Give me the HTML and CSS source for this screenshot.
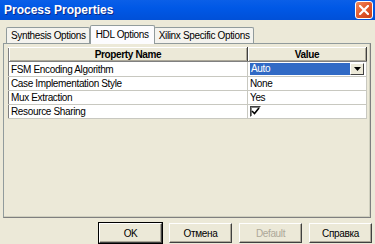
FILE: index.html
```html
<!DOCTYPE html>
<html lang="en">
<head>
    <meta charset="UTF-8">
    <meta name="viewport" content="width=device-width, initial-scale=1.0">
    <title>Process Properties</title>
    <link rel="stylesheet" href="styles.css">
</head>
<body>
    <div class="dialog">
        <div class="titlebar">
            <span class="title">Process Properties</span>
            <div class="btn-close">
                <svg width="10" height="10" viewBox="0 0 10 10">
                    <path d="M1 1 L9 9 M9 1 L1 9" stroke="#fff" stroke-width="2.2" stroke-linecap="square"/>
                </svg>
            </div>
        </div>

        <div class="tabs">
            <div class="tab">Synthesis Options</div>
            <div class="tab active">HDL Options</div>
            <div class="tab">Xilinx Specific Options</div>
        </div>

        <div class="panel">
            <table class="props">
                <thead>
                    <tr>
                        <th class="col-name">Property Name</th>
                        <th class="col-value">Value</th>
                    </tr>
                </thead>
                <tbody>
                    <tr>
                        <td>FSM Encoding Algorithm</td>
                        <td class="cell-combo">
                            <div class="combo">
                                <span class="combo-text">Auto</span>
                                <span class="combo-arrow">
                                    <svg width="7" height="4" viewBox="0 0 7 4"><path d="M0 0 H7 L3.5 4 Z" fill="#000"/></svg>
                                </span>
                            </div>
                        </td>
                    </tr>
                    <tr>
                        <td>Case Implementation Style</td>
                        <td>None</td>
                    </tr>
                    <tr>
                        <td>Mux Extraction</td>
                        <td>Yes</td>
                    </tr>
                    <tr>
                        <td>Resource Sharing</td>
                        <td>
                            <span class="check">
                                <svg width="9" height="9" viewBox="0 0 9 9"><path d="M1 4 L3.5 6.5 L8 1" stroke="#000" stroke-width="1.6" fill="none"/></svg>
                            </span>
                        </td>
                    </tr>
                </tbody>
            </table>
        </div>

        <div class="buttons">
            <button class="btn default">OK</button>
            <button class="btn">Отмена</button>
            <button class="btn" disabled>Default</button>
            <button class="btn">Справка</button>
        </div>
    </div>
</body>
</html>
```

FILE: styles.css
```css
* {
    box-sizing: border-box;
    margin: 0;
    padding: 0;
}

body {
    font-family: "Liberation Sans", Arial, sans-serif;
    font-size: 10px;
    letter-spacing: -0.35px;
    color: #000;
    background-color: #ece9d8;
    width: 375px;
    height: 244px;
    overflow: hidden;
}

.dialog {
    display: flex;
    flex-direction: column;
    height: 244px;
}

/* title bar */
.titlebar {
    height: 20px;
    display: flex;
    align-items: center;
    justify-content: space-between;
    padding: 0 2px 0 4px;
    background: linear-gradient(#0a5fe8 0%, #0058e6 40%, #0050d8 100%);
}

.title {
    color: #fff;
    font-weight: bold;
    font-size: 12px;
    letter-spacing: 0;
    text-shadow: 1px 1px 0 #0a2a8a;
}

.btn-close {
    width: 18px;
    height: 18px;
    margin-top: -1px;
    border: 1px solid #fff;
    border-radius: 3px;
    background: linear-gradient(135deg, #f08a5e, #e0552a 55%, #c8401a);
    display: flex;
    align-items: center;
    justify-content: center;
}

/* tabs */
.tabs {
    display: flex;
    align-items: flex-end;
    height: 23px;
    padding-left: 6px;
}

.tab {
    height: 16px;
    padding: 0 3px 0 4px;
    line-height: 15px;
    border: 1px solid #919b9c;
    border-bottom: none;
    border-radius: 2px 2px 0 0;
    background: #f4f3ee;
    margin-right: 1px;
}

.tab.active {
    height: 19px;
    line-height: 17px;
    padding: 0 5px;
    margin: 0 0 -1px -1px;
    background: #fcfcfe;
    position: relative;
    z-index: 1;
}

.tab.active + .tab {
    margin-left: -1px;
}

/* panel */
.panel {
    height: 175px;
    margin: 0 4px 0 3px;
    padding: 3px 4px 0 4px;
    border: 1px solid #919b9c;
    border-right-color: #7f7f7f;
    border-bottom-color: #7f7f7f;
    box-shadow: inset -1px -1px 0 #d0d0bf;
}

.props {
    width: 359px;
    border-collapse: collapse;
    table-layout: fixed;
    border-left: 1px solid #808080;
    border-right: 1px solid #404040;
}

.props th {
    height: 14px;
    font-weight: bold;
    text-align: center;
    background: #ece9d8;
    border-top: 1px solid #fff;
    border-right: 1px solid #404040;
    border-bottom: 1px solid #808080;
    box-shadow: inset 1px 0 0 #fff, inset -1px -1px 0 #aca899;
}

.col-name {
    width: 239px;
}

.props td {
    height: 14px;
    padding: 0 2px;
    background: #fff;
    border-bottom: 1px solid #c8c8c0;
    border-right: 1px solid #c8c8c0;
    white-space: nowrap;
    line-height: 13px;
}

.props td.cell-combo {
    padding: 1px 2px;
}

.combo {
    display: flex;
    height: 12px;
    align-items: stretch;
}

.combo-text {
    flex: 1;
    background: #316ac5;
    color: #fff;
    line-height: 12px;
    padding-left: 1px;
}

.combo-arrow {
    width: 14px;
    background: #ece9d8;
    border: 1px solid #fff;
    border-right-color: #404040;
    border-bottom-color: #404040;
    display: flex;
    align-items: center;
    justify-content: center;
}

.check {
    display: inline-flex;
    width: 11px;
    height: 11px;
    margin-top: 1px;
    border: 1px solid #fff;
    border-top-color: #404040;
    border-left-color: #404040;
    box-shadow: inset 1px 1px 0 #808080;
    background: #fff;
    align-items: center;
    justify-content: center;
    vertical-align: top;
}

/* buttons */
.buttons {
    display: flex;
    justify-content: flex-end;
    gap: 7px;
    padding: 5px 3px 0 0;
}

.btn {
    width: 63px;
    height: 20px;
    font-family: "Liberation Sans", Arial, sans-serif;
    font-size: 10px;
    letter-spacing: -0.35px;
    color: #000;
    background: #ece9d8;
    border: 1px solid #fff;
    border-right-color: #404040;
    border-bottom-color: #404040;
    box-shadow: inset -1px -1px 0 #aca899;
}

.btn.default {
    outline: 1px solid #000;
}

.btn:disabled {
    color: #aca899;
}
```
